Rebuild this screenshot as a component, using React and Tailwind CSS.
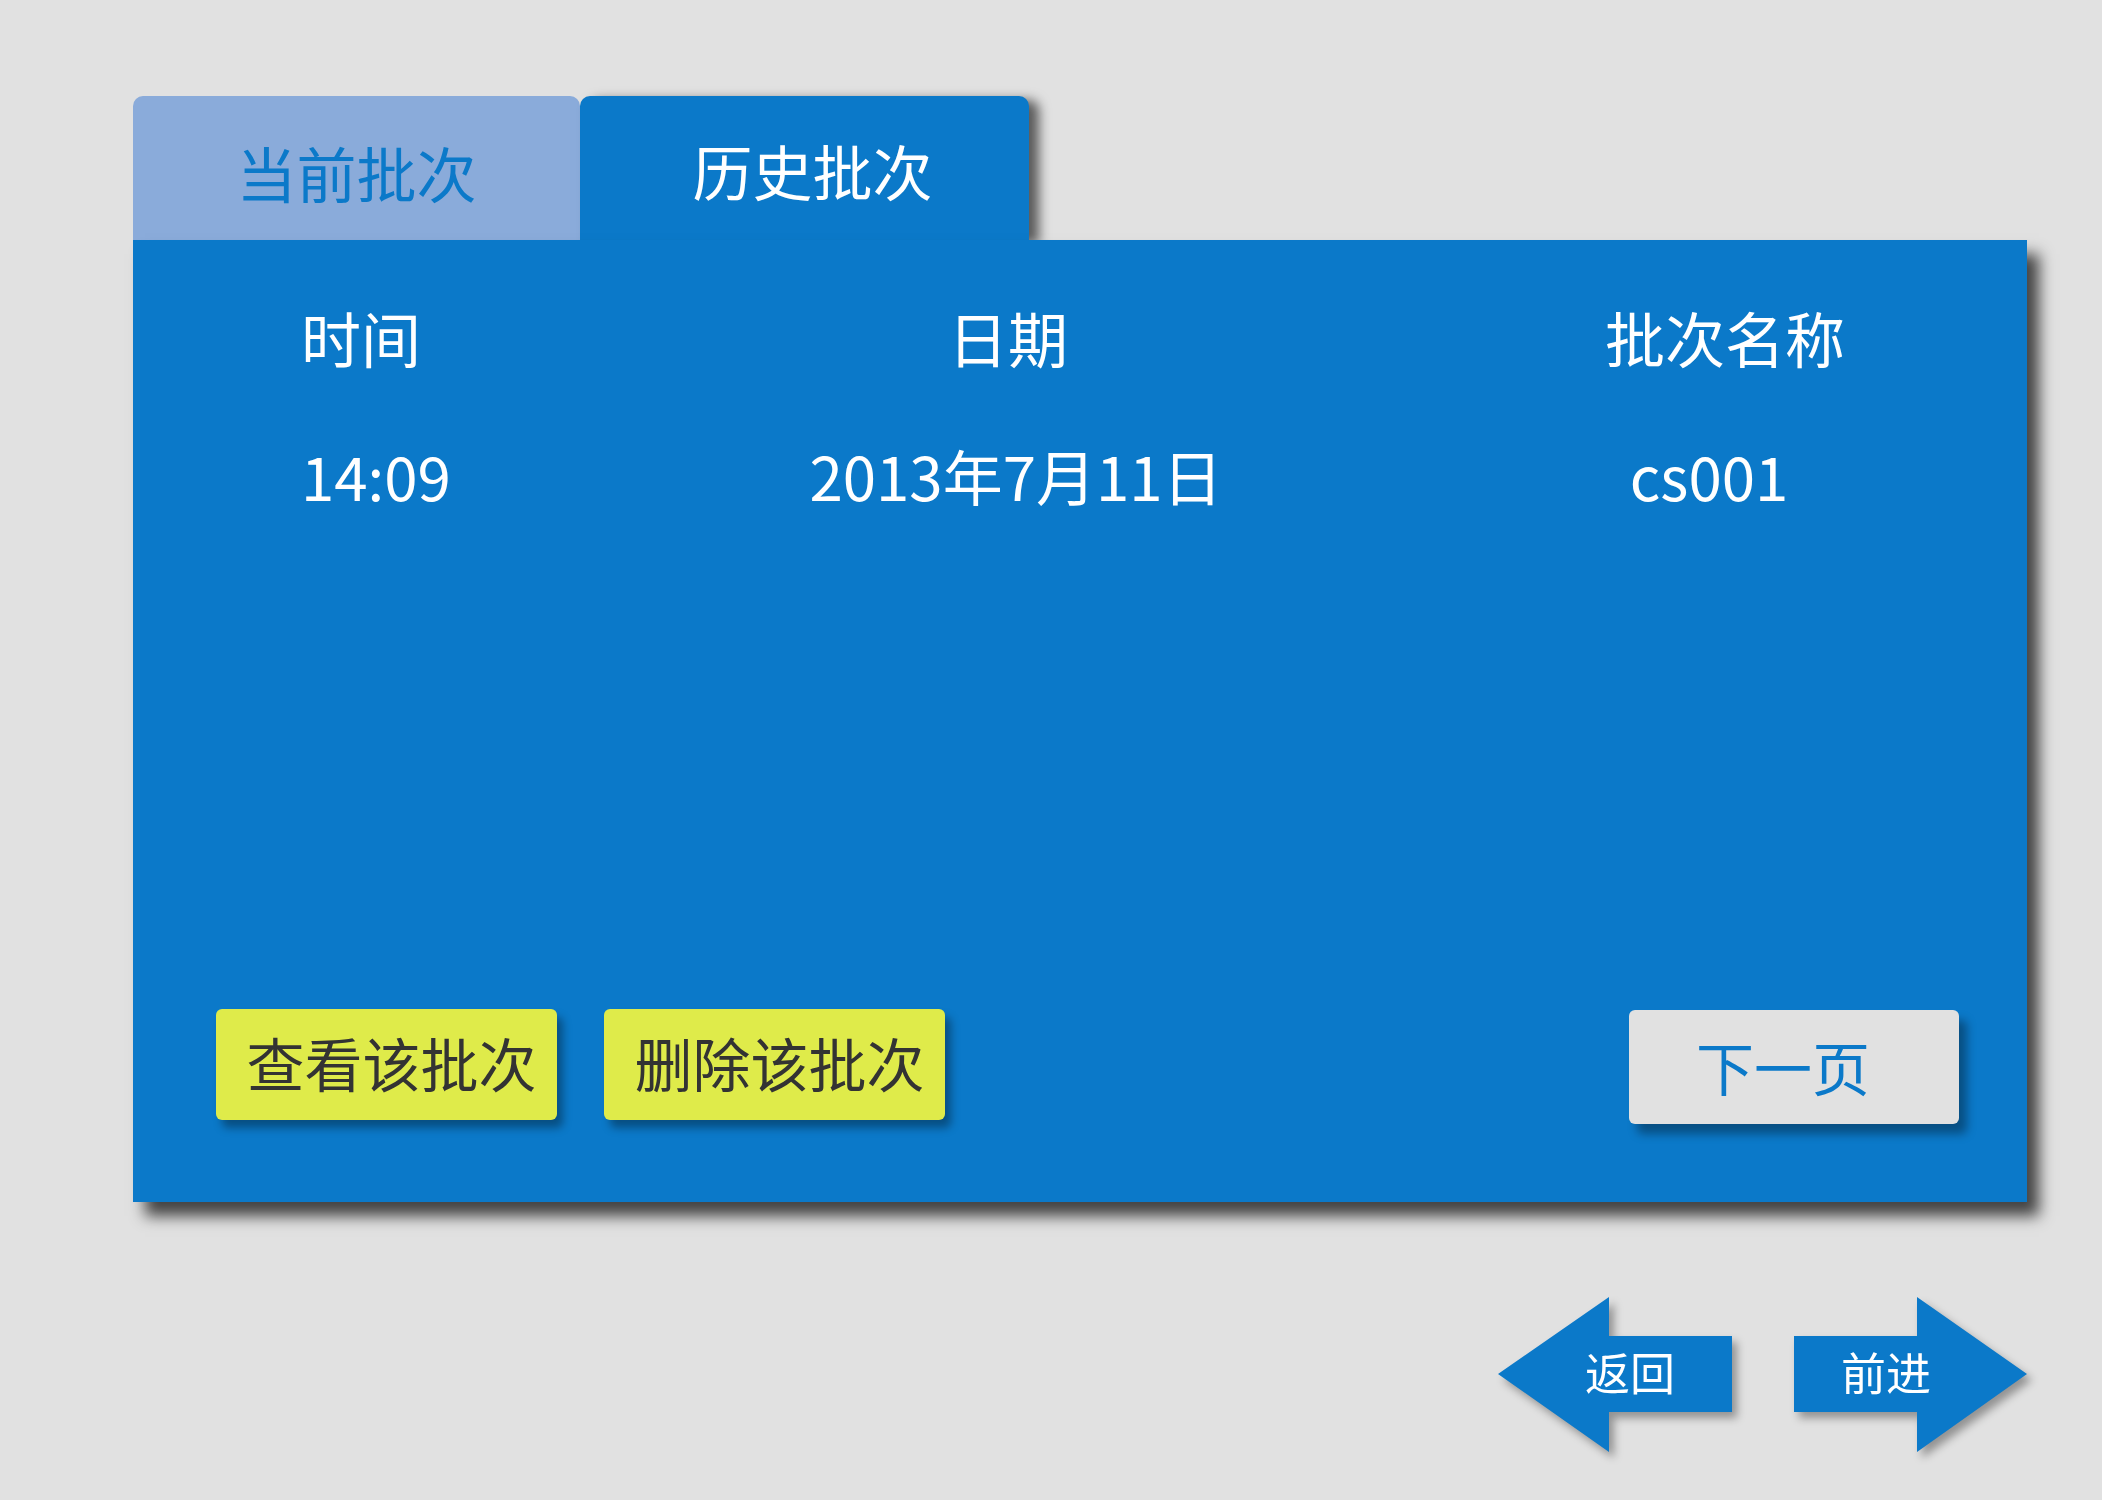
import React from 'react';

const font = { fontFamily: '"Noto Sans CJK SC", "Noto Sans", sans-serif' };

const rows = [{ time: '14:09', date: '2013年7月11日', name: 'cs001' }];

const BackArrow = () => (
  <div className="relative w-[234px] h-[155px] drop-shadow-[5px_6px_4px_rgba(0,0,0,0.35)]">
    <svg className="absolute inset-0" width="234" height="155" viewBox="0 0 234 155">
      <polygon points="0,77 111,0 111,39 234,39 234,115 111,115 111,155" fill="#0b79c9" />
    </svg>
    <span className="absolute left-[87px] top-[52px] text-[45px] leading-none text-white">返回</span>
  </div>
);

const ForwardArrow = () => (
  <div className="relative w-[233px] h-[155px] drop-shadow-[5px_6px_4px_rgba(0,0,0,0.35)]">
    <svg className="absolute inset-0" width="233" height="155" viewBox="0 0 233 155">
      <polygon points="0,39 123,39 123,0 233,77 123,155 123,115 0,115" fill="#0b79c9" />
    </svg>
    <span className="absolute left-[47px] top-[52px] text-[45px] leading-none text-white">前进</span>
  </div>
);

export default function App() {
  return (
    <div className="w-full h-[1500px] bg-[#e1e1e1] pt-[96px] pl-[133px]" style={font}>
      <div className="w-[1894px]">
        {/* Tabs */}
        <div className="flex h-[144px]">
          <div className="w-[447px] h-full rounded-t-[10px] bg-[#8aabda] flex items-center justify-center pt-2 text-[60px] leading-none text-[#0b79c9]">
            当前批次
          </div>
          <div className="w-[449px] h-full rounded-t-[10px] bg-[#0b79c9] flex items-center justify-center pt-1 pl-4 text-[60px] leading-none text-white shadow-[10px_4px_12px_rgba(0,0,0,0.6)]">
            历史批次
          </div>
        </div>

        {/* Panel */}
        <div className="relative h-[962px] bg-[#0b79c9] flex flex-col shadow-[12px_14px_14px_rgba(0,0,0,0.7)]">
          <div className="flex pt-[67px] pl-[168px] text-[60px] leading-none text-white">
            <div className="w-[407px]">时间</div>
            <div className="w-[600px] text-center">日期</div>
            <div className="ml-[117px] w-[600px] text-center">批次名称</div>
          </div>

          {rows.map((r, i) => (
            <div key={i} className="flex pt-[78px] pl-[168px] text-[60px] leading-none text-white">
              <div className="w-[407px]">{r.time}</div>
              <div className="w-[616px] text-center">{r.date}</div>
              <div className="ml-[85px] w-[600px] text-center">{r.name}</div>
            </div>
          ))}

          {/* Bottom buttons */}
          <div className="mt-auto flex items-start pl-[83px] pr-[68px] pb-[78px]">
            <button className="w-[341px] h-[111px] rounded-[6px] bg-[#dfeb4a] pl-[10px] pb-[6px] text-[58px] leading-none text-[#333333] shadow-[6px_8px_8px_rgba(0,0,0,0.35)]">
              查看该批次
            </button>
            <button className="ml-[47px] w-[341px] h-[111px] rounded-[6px] bg-[#dfeb4a] pl-[10px] pb-[6px] text-[58px] leading-none text-[#333333] shadow-[6px_8px_8px_rgba(0,0,0,0.35)]">
              删除该批次
            </button>
            <button className="ml-auto mt-[1px] w-[330px] h-[114px] rounded-[6px] bg-[#e1e1e1] pr-[22px] pb-[2px] text-[58px] leading-none text-[#0b79c9] shadow-[8px_10px_10px_rgba(0,0,0,0.35)]">
              下一页
            </button>
          </div>
        </div>

        {/* Back / forward */}
        <div className="flex justify-end mt-[95px] gap-[62px]">
          <BackArrow />
          <ForwardArrow />
        </div>
      </div>
    </div>
  );
}
